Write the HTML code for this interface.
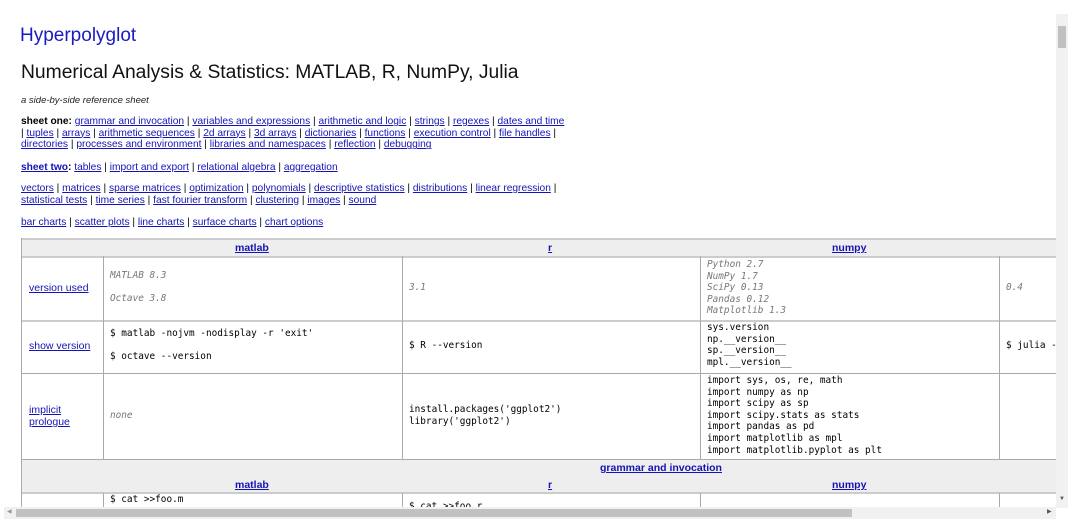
<!DOCTYPE html>
<html><head><meta charset="utf-8"><style>
body{margin:0;width:1084px;height:530px;overflow:hidden;background:#fff;font-family:"Liberation Sans",sans-serif;position:relative}
.t{position:absolute;white-space:nowrap}
.s{font-size:10.2px;color:#000;line-height:11.7px}
.s a{color:#1414b4;text-decoration:underline}
.c{position:absolute;box-sizing:border-box}
.m{font-family:"DejaVu Sans Mono","Liberation Mono",monospace;font-size:9.4px;line-height:11.6px;white-space:pre;color:#000}
.g{color:#777;font-style:italic}
.l{font-size:10.5px;color:#1414b4;text-decoration:underline}
.h{font-size:10.5px;font-weight:bold;color:#1414b4;text-decoration:underline}
.vl{position:absolute;width:1px;background:#aaa}
.hl{position:absolute;height:1px;background:#aaa;left:21px;width:1035px}
</style></head><body>
<div class="t" style="left:20px;top:25px;font-size:19px;color:#1a1ac0">Hyperpolyglot</div>
<div class="t" style="left:21px;top:62px;font-size:19.3px;color:#111">Numerical Analysis &amp; Statistics: MATLAB, R, NumPy, Julia</div>
<div class="t" style="left:21px;top:95px;font-size:9.5px;font-style:italic;color:#222">a side-by-side reference sheet</div>
<div class="t s" style="left:21px;top:116px"><b>sheet one:</b> <a>grammar and invocation</a> | <a>variables and expressions</a> | <a>arithmetic and logic</a> | <a>strings</a> | <a>regexes</a> | <a>dates and time</a><br>| <a>tuples</a> | <a>arrays</a> | <a>arithmetic sequences</a> | <a>2d arrays</a> | <a>3d arrays</a> | <a>dictionaries</a> | <a>functions</a> | <a>execution control</a> | <a>file handles</a> |<br><a>directories</a> | <a>processes and environment</a> | <a>libraries and namespaces</a> | <a>reflection</a> | <a>debugging</a></div>
<div class="t s" style="left:21px;top:162px"><a><b>sheet two</b></a><b>:</b> <a>tables</a> | <a>import and export</a> | <a>relational algebra</a> | <a>aggregation</a></div>
<div class="t s" style="left:21px;top:183px"><a>vectors</a> | <a>matrices</a> | <a>sparse matrices</a> | <a>optimization</a> | <a>polynomials</a> | <a>descriptive statistics</a> | <a>distributions</a> | <a>linear regression</a> |<br><a>statistical tests</a> | <a>time series</a> | <a>fast fourier transform</a> | <a>clustering</a> | <a>images</a> | <a>sound</a></div>
<div class="t s" style="left:21px;top:217px"><a>bar charts</a> | <a>scatter plots</a> | <a>line charts</a> | <a>surface charts</a> | <a>chart options</a></div>

<div class="c" style="left:21px;top:238px;width:1035px;height:18px;background:#eee"></div>
<div class="c" style="left:21px;top:459px;width:1035px;height:33px;background:#eee"></div>
<div class="hl" style="top:238px;height:2px;background:#ccc"></div>
<div class="hl" style="top:256px;height:2px;background:#ccc"></div>
<div class="hl" style="top:320px;height:2px;background:#ccc"></div>
<div class="hl" style="top:373px"></div>
<div class="hl" style="top:459px"></div>
<div class="hl" style="top:492px;height:2px;background:#ccc"></div>
<div class="vl" style="left:21px;top:238px;height:270px"></div>
<div class="vl" style="left:103px;top:256px;height:203px"></div>
<div class="vl" style="left:402px;top:256px;height:203px"></div>
<div class="vl" style="left:700px;top:256px;height:203px"></div>
<div class="vl" style="left:999px;top:256px;height:203px"></div>
<div class="vl" style="left:103px;top:493px;height:15px"></div>
<div class="vl" style="left:402px;top:493px;height:15px"></div>
<div class="vl" style="left:700px;top:493px;height:15px"></div>
<div class="vl" style="left:999px;top:493px;height:15px"></div>

<div class="t h" style="left:235px;top:242px">matlab</div>
<div class="t h" style="left:548px;top:242px">r</div>
<div class="t h" style="left:832px;top:242px">numpy</div>

<div class="t l" style="left:29px;top:282px">version used</div>
<div class="t m g" style="left:110px;top:270px">MATLAB 8.3</div>
<div class="t m g" style="left:110px;top:293px">Octave 3.8</div>
<div class="t m g" style="left:409px;top:282px">3.1</div>
<div class="t m g" style="left:707px;top:259px">Python 2.7
NumPy 1.7
SciPy 0.13
Pandas 0.12
Matplotlib 1.3</div>
<div class="t m g" style="left:1006px;top:282px">0.4</div>

<div class="t l" style="left:29px;top:340px">show version</div>
<div class="t m" style="left:110px;top:328px">$ matlab -nojvm -nodisplay -r 'exit'</div>
<div class="t m" style="left:110px;top:351px">$ octave --version</div>
<div class="t m" style="left:409px;top:340px">$ R --version</div>
<div class="t m" style="left:707px;top:322px">sys.version
np.__version__
sp.__version__
mpl.__version__</div>
<div class="t m" style="left:1006px;top:340px">$ julia -</div>

<div class="t l" style="left:29px;top:404px;line-height:12px">implicit<br>prologue</div>
<div class="t m g" style="left:110px;top:410px">none</div>
<div class="t m" style="left:409px;top:404px">install.packages('ggplot2')
library('ggplot2')</div>
<div class="t m" style="left:707px;top:375px">import sys, os, re, math
import numpy as np
import scipy as sp
import scipy.stats as stats
import pandas as pd
import matplotlib as mpl
import matplotlib.pyplot as plt</div>

<div class="t h" style="left:600px;top:462px">grammar and invocation</div>
<div class="t h" style="left:235px;top:479px">matlab</div>
<div class="t h" style="left:548px;top:479px">r</div>
<div class="t h" style="left:832px;top:479px">numpy</div>
<div class="t m" style="left:110px;top:494px">$ cat &gt;&gt;foo.m</div>
<div class="t m" style="left:409px;top:501px;height:6px;overflow:hidden">$ cat &gt;&gt;foo.r</div>

<div class="c" style="left:1056px;top:0;width:28px;height:530px;background:#fff"></div>
<div class="c" style="left:1056px;top:14px;width:12px;height:494px;background:#f1f1f1"></div>
<div class="c" style="left:1058px;top:26px;width:8px;height:22px;background:#c1c1c1"></div>
<div class="t" style="left:1059px;top:496px;font-size:6px;color:#555">▼</div>
<div class="c" style="left:4px;top:507px;width:1052px;height:12px;background:#f1f1f1"></div>
<div class="c" style="left:16px;top:509px;width:836px;height:8px;background:#c1c1c1"></div>
<div class="t" style="left:7px;top:508px;font-size:6px;color:#999">◀</div>
<div class="t" style="left:1047px;top:508px;font-size:6px;color:#555">▶</div>
<div class="c" style="left:0;top:519px;width:1084px;height:11px;background:#fff"></div>
</body></html>
